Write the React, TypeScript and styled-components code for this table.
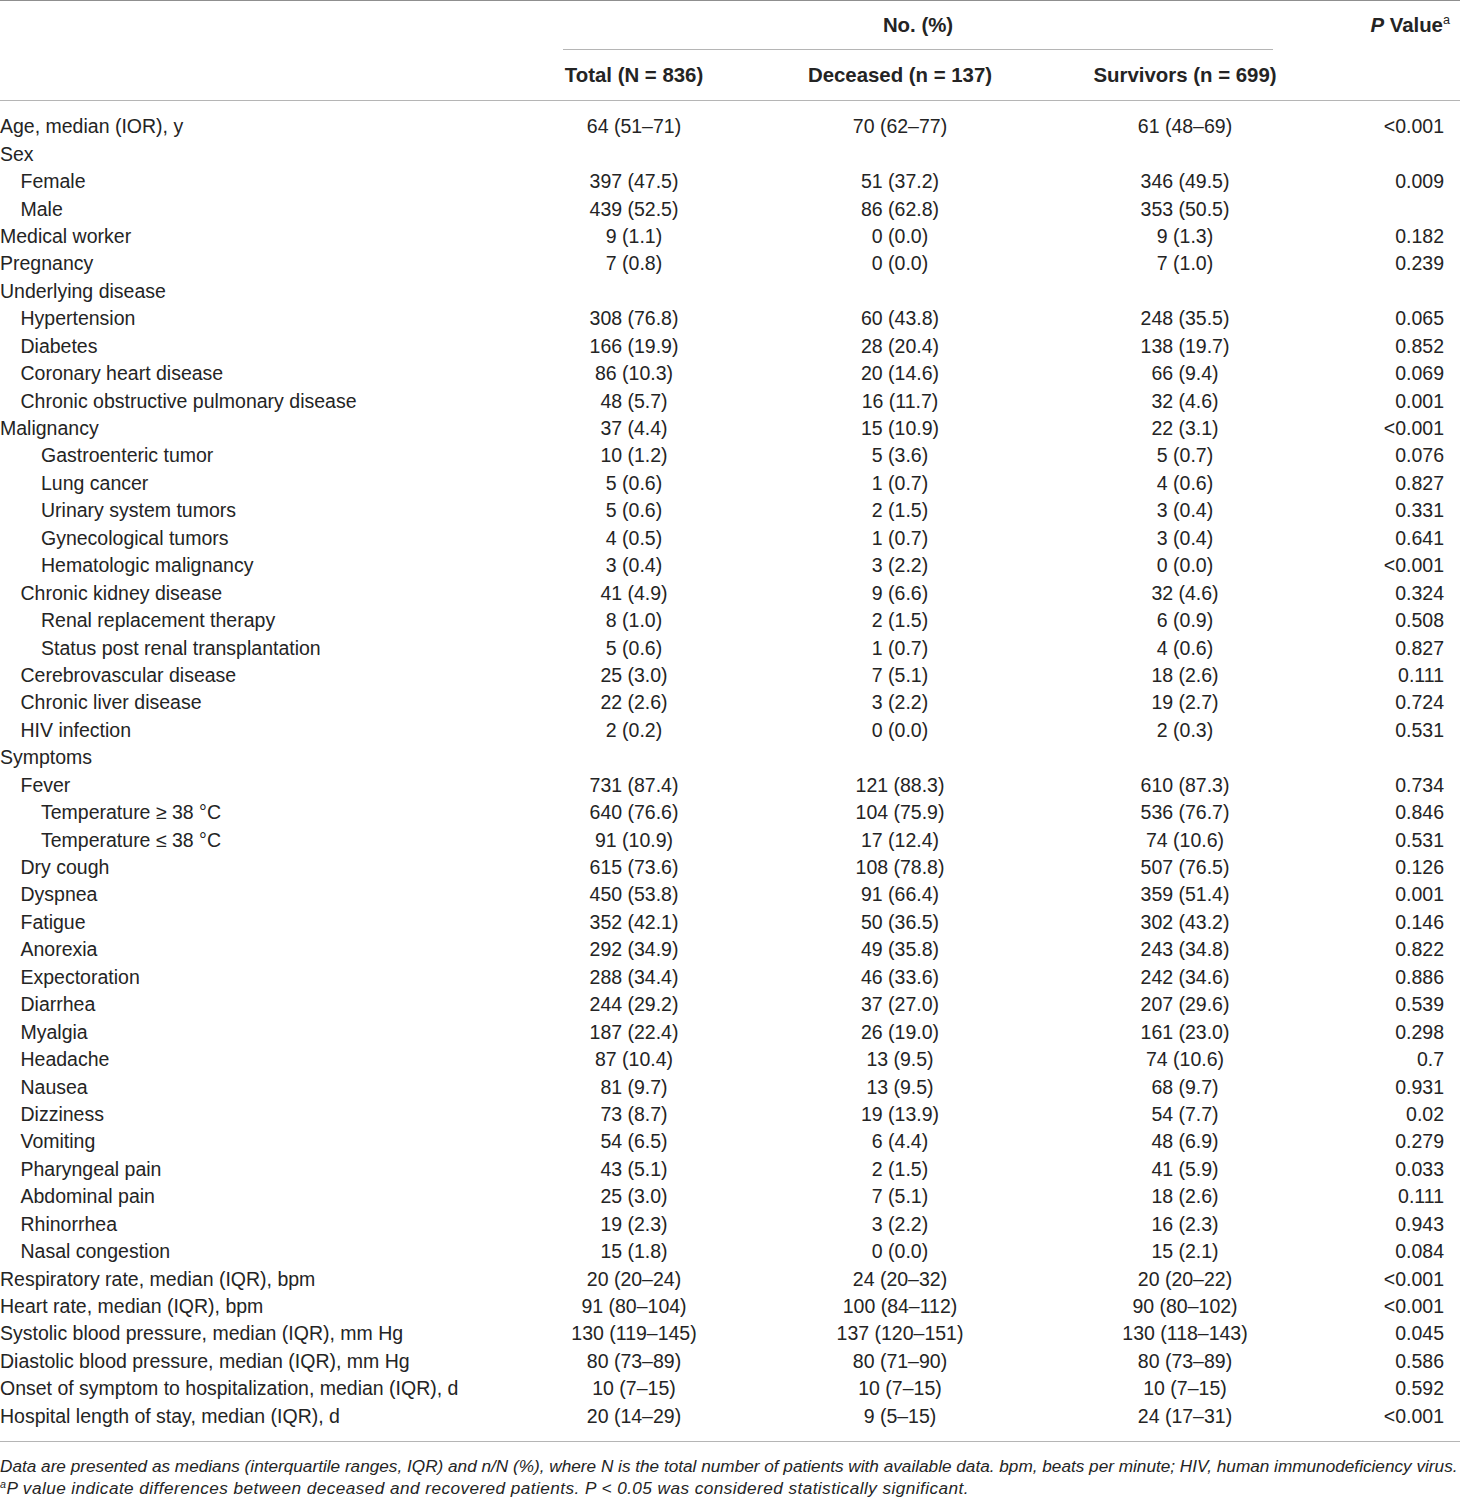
import React from "react";
import styled, { createGlobalStyle } from "styled-components";

const Global = createGlobalStyle`
  html, body { margin: 0; padding: 0; background: #ffffff; }
  body { font-family: "Liberation Sans", Arial, Helvetica, sans-serif; color: #242424; }
`;

const COLS = "512px 244px 288px 282px 1fr";

const Page = styled.div`
  width: 1460px;
`;

const Table = styled.div`
  border-top: 1.5px solid #8f8f8f;
`;

const Head = styled.div`
  display: grid;
  grid-template-columns: ${COLS};
  grid-template-rows: 49px 50px;
  border-bottom: 1.5px solid #b5b5b5;
  font-weight: 700;
  font-size: 20.4px;
`;

const Group = styled.div`
  grid-column: 2 / 5;
  grid-row: 1;
  margin: 0 53px 0 51px;
  border-bottom: 1.5px solid #b5b5b5;
  display: flex;
  align-items: center;
  justify-content: center;
`;

const PHead = styled.div`
  grid-column: 5;
  grid-row: 1;
  display: flex;
  align-items: center;
  justify-content: flex-end;
  padding-right: 10px;
`;

const ColHead = styled.div<{ $col: number }>`
  grid-column: ${(p) => p.$col};
  grid-row: 2;
  display: flex;
  align-items: center;
  justify-content: center;
`;

const Sup = styled.sup`
  font-size: 0.62em;
  font-weight: 400;
  vertical-align: 0.6em;
  line-height: 0;
`;

const Body = styled.div`
  padding: 12px 0 11px;
  border-bottom: 1.5px solid #b5b5b5;
`;

const Row = styled.div`
  display: grid;
  grid-template-columns: ${COLS};
  height: 27.45px;
  align-items: center;
  font-size: 19.5px;
  white-space: nowrap;
`;

const Label = styled.div<{ $level: number }>`
  padding-left: ${(p) => p.$level * 20.5}px;
`;

const Num = styled.div`
  text-align: center;
`;

const PVal = styled.div`
  text-align: right;
  padding-right: 16px;
`;

const Notes = styled.div`
  padding-top: 13px;
  font-style: italic;
  font-size: 17.2px;
  line-height: 22px;
`;

const NoteLine = styled.div<{ $spacing: number }>`
  white-space: nowrap;
  letter-spacing: ${(p) => p.$spacing}px;
`;

type R = [string, number, string, string, string, string];

const rows: R[] = [
  ["Age, median (IOR), y", 0, "64 (51–71)", "70 (62–77)", "61 (48–69)", "<0.001"],
  ["Sex", 0, "", "", "", ""],
  ["Female", 1, "397 (47.5)", "51 (37.2)", "346 (49.5)", "0.009"],
  ["Male", 1, "439 (52.5)", "86 (62.8)", "353 (50.5)", ""],
  ["Medical worker", 0, "9 (1.1)", "0 (0.0)", "9 (1.3)", "0.182"],
  ["Pregnancy", 0, "7 (0.8)", "0 (0.0)", "7 (1.0)", "0.239"],
  ["Underlying disease", 0, "", "", "", ""],
  ["Hypertension", 1, "308 (76.8)", "60 (43.8)", "248 (35.5)", "0.065"],
  ["Diabetes", 1, "166 (19.9)", "28 (20.4)", "138 (19.7)", "0.852"],
  ["Coronary heart disease", 1, "86 (10.3)", "20 (14.6)", "66 (9.4)", "0.069"],
  ["Chronic obstructive pulmonary disease", 1, "48 (5.7)", "16 (11.7)", "32 (4.6)", "0.001"],
  ["Malignancy", 0, "37 (4.4)", "15 (10.9)", "22 (3.1)", "<0.001"],
  ["Gastroenteric tumor", 2, "10 (1.2)", "5 (3.6)", "5 (0.7)", "0.076"],
  ["Lung cancer", 2, "5 (0.6)", "1 (0.7)", "4 (0.6)", "0.827"],
  ["Urinary system tumors", 2, "5 (0.6)", "2 (1.5)", "3 (0.4)", "0.331"],
  ["Gynecological tumors", 2, "4 (0.5)", "1 (0.7)", "3 (0.4)", "0.641"],
  ["Hematologic malignancy", 2, "3 (0.4)", "3 (2.2)", "0 (0.0)", "<0.001"],
  ["Chronic kidney disease", 1, "41 (4.9)", "9 (6.6)", "32 (4.6)", "0.324"],
  ["Renal replacement therapy", 2, "8 (1.0)", "2 (1.5)", "6 (0.9)", "0.508"],
  ["Status post renal transplantation", 2, "5 (0.6)", "1 (0.7)", "4 (0.6)", "0.827"],
  ["Cerebrovascular disease", 1, "25 (3.0)", "7 (5.1)", "18 (2.6)", "0.111"],
  ["Chronic liver disease", 1, "22 (2.6)", "3 (2.2)", "19 (2.7)", "0.724"],
  ["HIV infection", 1, "2 (0.2)", "0 (0.0)", "2 (0.3)", "0.531"],
  ["Symptoms", 0, "", "", "", ""],
  ["Fever", 1, "731 (87.4)", "121 (88.3)", "610 (87.3)", "0.734"],
  ["Temperature ≥ 38 °C", 2, "640 (76.6)", "104 (75.9)", "536 (76.7)", "0.846"],
  ["Temperature ≤ 38 °C", 2, "91 (10.9)", "17 (12.4)", "74 (10.6)", "0.531"],
  ["Dry cough", 1, "615 (73.6)", "108 (78.8)", "507 (76.5)", "0.126"],
  ["Dyspnea", 1, "450 (53.8)", "91 (66.4)", "359 (51.4)", "0.001"],
  ["Fatigue", 1, "352 (42.1)", "50 (36.5)", "302 (43.2)", "0.146"],
  ["Anorexia", 1, "292 (34.9)", "49 (35.8)", "243 (34.8)", "0.822"],
  ["Expectoration", 1, "288 (34.4)", "46 (33.6)", "242 (34.6)", "0.886"],
  ["Diarrhea", 1, "244 (29.2)", "37 (27.0)", "207 (29.6)", "0.539"],
  ["Myalgia", 1, "187 (22.4)", "26 (19.0)", "161 (23.0)", "0.298"],
  ["Headache", 1, "87 (10.4)", "13 (9.5)", "74 (10.6)", "0.7"],
  ["Nausea", 1, "81 (9.7)", "13 (9.5)", "68 (9.7)", "0.931"],
  ["Dizziness", 1, "73 (8.7)", "19 (13.9)", "54 (7.7)", "0.02"],
  ["Vomiting", 1, "54 (6.5)", "6 (4.4)", "48 (6.9)", "0.279"],
  ["Pharyngeal pain", 1, "43 (5.1)", "2 (1.5)", "41 (5.9)", "0.033"],
  ["Abdominal pain", 1, "25 (3.0)", "7 (5.1)", "18 (2.6)", "0.111"],
  ["Rhinorrhea", 1, "19 (2.3)", "3 (2.2)", "16 (2.3)", "0.943"],
  ["Nasal congestion", 1, "15 (1.8)", "0 (0.0)", "15 (2.1)", "0.084"],
  ["Respiratory rate, median (IQR), bpm", 0, "20 (20–24)", "24 (20–32)", "20 (20–22)", "<0.001"],
  ["Heart rate, median (IQR), bpm", 0, "91 (80–104)", "100 (84–112)", "90 (80–102)", "<0.001"],
  ["Systolic blood pressure, median (IQR), mm Hg", 0, "130 (119–145)", "137 (120–151)", "130 (118–143)", "0.045"],
  ["Diastolic blood pressure, median (IQR), mm Hg", 0, "80 (73–89)", "80 (71–90)", "80 (73–89)", "0.586"],
  ["Onset of symptom to hospitalization, median (IQR), d", 0, "10 (7–15)", "10 (7–15)", "10 (7–15)", "0.592"],
  ["Hospital length of stay, median (IQR), d", 0, "20 (14–29)", "9 (5–15)", "24 (17–31)", "<0.001"],
];

export default function App() {
  return (
    <Page>
      <Global />
      <Table>
        <Head>
          <Group>No. (%)</Group>
          <PHead>
            <span>
              <i>P</i> Value<Sup>a</Sup>
            </span>
          </PHead>
          <ColHead $col={2}>Total (N = 836)</ColHead>
          <ColHead $col={3}>Deceased (n = 137)</ColHead>
          <ColHead $col={4}>Survivors (n = 699)</ColHead>
        </Head>
        <Body>
          {rows.map(([label, level, t, d, s, p], i) => (
            <Row key={i}>
              <Label $level={level}>{label}</Label>
              <Num>{t}</Num>
              <Num>{d}</Num>
              <Num>{s}</Num>
              <PVal>{p}</PVal>
            </Row>
          ))}
        </Body>
      </Table>
      <Notes>
        <NoteLine $spacing={0}>
          Data are presented as medians (interquartile ranges, IQR) and n/N (%), where N is the total number of patients with available data. bpm, beats per minute; HIV, human immunodeficiency virus.
        </NoteLine>
        <NoteLine $spacing={0.44}>
          <Sup>a</Sup>P value indicate differences between deceased and recovered patients. P &lt; 0.05 was considered statistically significant.
        </NoteLine>
      </Notes>
    </Page>
  );
}
